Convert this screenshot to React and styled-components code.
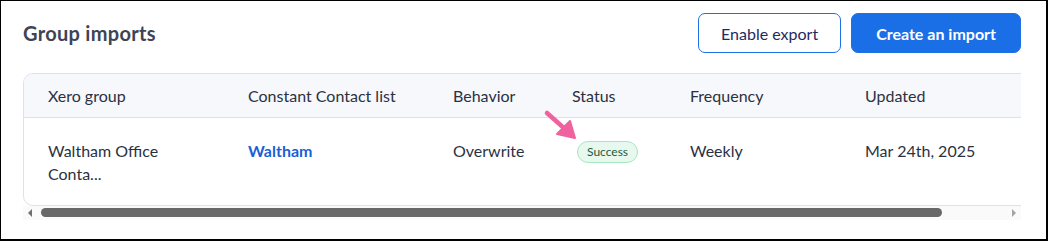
import React from "react";
import styled, { createGlobalStyle } from "styled-components";

const GlobalStyle = createGlobalStyle`
  html, body {
    margin: 0;
    padding: 0;
    background: #ffffff;
  }
  body {
    font-family: Lato, "Open Sans", Arial, sans-serif;
    color: #2b3142;
  }
`;

const Frame = styled.div`
  box-sizing: border-box;
  width: 1048px;
  height: 241px;
  border-style: solid;
  border-color: #000000;
  border-width: 1px 2px 2px 1px;
  padding: 12px 25px 0 22px;
  position: relative;
`;

const TopBar = styled.div`
  display: flex;
  align-items: center;
  justify-content: space-between;
  height: 40px;
`;

const Title = styled.h1`
  margin: 0;
  font-size: 20px;
  font-weight: 700;
  color: #3d4456;
  letter-spacing: 0.3px;
`;

const Actions = styled.div`
  display: flex;
  gap: 10px;
`;

const Button = styled.button`
  box-sizing: border-box;
  height: 40px;
  padding: 0 ${(p) => (p.$primary ? 24 : 22)}px;
  border-radius: 7px;
  font-family: inherit;
  font-size: 16px;
  cursor: pointer;
  border: 1px solid #1f6fe5;
  background: ${(p) => (p.$primary ? "#1b6fe6" : "#ffffff")};
  color: ${(p) => (p.$primary ? "#ffffff" : "#1f2b5e")};
  font-weight: ${(p) => (p.$primary ? 700 : 400)};
`;

const TableArea = styled.div`
  margin-top: 20px;
  width: 998px;
`;

const Viewport = styled.div`
  overflow: hidden;
  width: 100%;
`;

const Card = styled.div`
  width: 1120px;
  border: 1px solid #dde2ea;
  border-radius: 10px;
  overflow: hidden;
`;

const Table = styled.table`
  border-collapse: collapse;
  table-layout: fixed;
  width: 100%;
  font-size: 16px;
`;

const Head = styled.thead`
  background: #f6f8fc;
`;

const Th = styled.th`
  box-sizing: border-box;
  text-align: left;
  font-weight: 400;
  color: #2b3142;
  height: 43px;
  padding: 0 0 0 24px;
  border-bottom: 1px solid #dde2ea;
  width: ${(p) => p.$w}px;
`;

const Td = styled.td`
  box-sizing: border-box;
  padding: 21px 0 20px 24px;
  vertical-align: top;
  line-height: 23px;
  color: #2b3142;
`;

const Clamp = styled.div`
  width: 130px;
`;

const Link = styled.a`
  color: #1a5fd6;
  font-weight: 700;
  text-decoration: none;
`;

const Badge = styled.span`
  display: inline-block;
  margin-left: 5px;
  padding: 0 9px;
  height: 20px;
  line-height: 20px;
  font-size: 12px;
  color: #1d5b3a;
  background: #e7f9ef;
  border: 1px solid #a6e6c1;
  border-radius: 11px;
  vertical-align: middle;
`;

const ScrollTrack = styled.div`
  display: flex;
  align-items: center;
  height: 14px;
  background: #fafafa;
  padding: 0 5px;
  gap: 6px;
`;

const Arrow = styled.span`
  width: 0;
  height: 0;
  border-top: 4px solid transparent;
  border-bottom: 4px solid transparent;
  ${(p) =>
    p.$dir === "left"
      ? `border-right: 4px solid #6e6e6e;`
      : `border-left: 4px solid #a3a3a3;`}
`;

const Rail = styled.div`
  flex: 1;
  display: flex;
  align-items: center;
  padding-left: 3px;
`;

const Thumb = styled.div`
  height: 9px;
  width: 93.4%;
  border-radius: 5px;
  background: #686868;
`;

const Pointer = styled.svg`
  position: absolute;
  left: 541px;
  top: 107px;
`;

const columns = [
  { label: "Xero group", w: 200 },
  { label: "Constant Contact list", w: 205 },
  { label: "Behavior", w: 119 },
  { label: "Status", w: 118 },
  { label: "Frequency", w: 175 },
  { label: "Updated", w: 303 },
];

export default function App() {
  return (
    <>
      <GlobalStyle />
      <Frame>
        <TopBar>
          <Title>Group imports</Title>
          <Actions>
            <Button>Enable export</Button>
            <Button $primary>Create an import</Button>
          </Actions>
        </TopBar>
        <TableArea>
          <Viewport>
            <Card>
              <Table>
                <Head>
                  <tr>
                    {columns.map((c) => (
                      <Th key={c.label} $w={c.w}>
                        {c.label}
                      </Th>
                    ))}
                  </tr>
                </Head>
                <tbody>
                  <tr>
                    <Td>
                      <Clamp>Waltham Office Conta...</Clamp>
                    </Td>
                    <Td>
                      <Link href="#">Waltham</Link>
                    </Td>
                    <Td>Overwrite</Td>
                    <Td>
                      <Badge>Success</Badge>
                    </Td>
                    <Td>Weekly</Td>
                    <Td>Mar 24th, 2025</Td>
                  </tr>
                </tbody>
              </Table>
            </Card>
          </Viewport>
          <ScrollTrack>
            <Arrow $dir="left" />
            <Rail>
              <Thumb />
            </Rail>
            <Arrow $dir="right" />
          </ScrollTrack>
        </TableArea>
        <Pointer width="40" height="36" viewBox="0 0 40 36">
          <line x1="5" y1="5" x2="23" y2="21" stroke="#f0629f" strokeWidth="4.5" strokeLinecap="round" />
          <polygon points="33,30 15,26 28,13" fill="#f0629f" stroke="#f0629f" strokeWidth="2" strokeLinejoin="round" />
        </Pointer>
      </Frame>
    </>
  );
}
